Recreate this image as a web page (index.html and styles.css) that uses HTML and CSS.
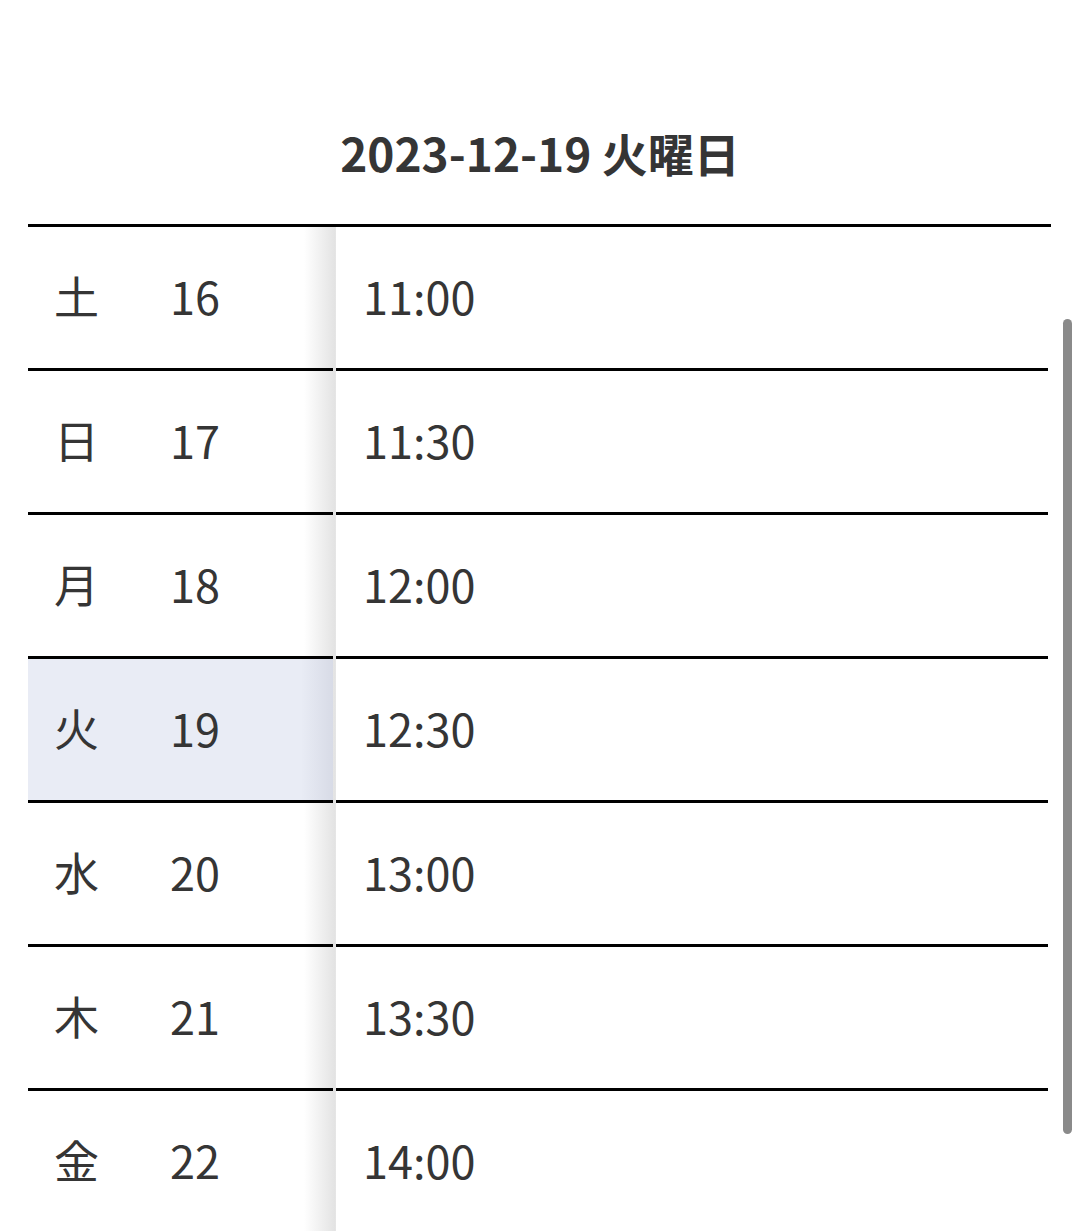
FILE: index.html
```html
<!DOCTYPE html>
<html lang="ja">
<head>
<meta charset="utf-8">
<title>日付と時間</title>
<link rel="stylesheet" href="styles.css">
</head>
<body>
<header class="header">
  <h1 class="title">2023-12-19 火曜日</h1>
</header>
<section class="picker">
  <div class="col col-days">
    <div class="cell"><span class="wd">土</span><span class="dn">16</span></div>
    <div class="cell"><span class="wd">日</span><span class="dn">17</span></div>
    <div class="cell"><span class="wd">月</span><span class="dn">18</span></div>
    <div class="cell is-selected"><span class="wd">火</span><span class="dn">19</span></div>
    <div class="cell"><span class="wd">水</span><span class="dn">20</span></div>
    <div class="cell"><span class="wd">木</span><span class="dn">21</span></div>
    <div class="cell"><span class="wd">金</span><span class="dn">22</span></div>
  </div>
  <div class="col col-times">
    <div class="cell">11:00</div>
    <div class="cell">11:30</div>
    <div class="cell">12:00</div>
    <div class="cell">12:30</div>
    <div class="cell">13:00</div>
    <div class="cell">13:30</div>
    <div class="cell">14:00</div>
  </div>
  <div class="scrollbar"></div>
</section>
</body>
</html>
```
FILE: styles.css
```css
html, body {
  margin: 0;
  padding: 0;
  overflow: hidden;
  background: #fff;
}
body {
  font-family: "Noto Sans CJK JP", "Noto Sans", sans-serif;
  color: #353535;
}
.header {
  height: 224px;
  box-sizing: border-box;
  padding-top: 120px;
}
.title {
  margin: 0;
  font-size: 46px;
  line-height: 64px;
  font-weight: 700;
  text-align: center;
  color: #353535;
}
.picker {
  position: relative;
  margin: 0 29px 0 28px;
  border-top: 3px solid #000;
  display: flex;
  gap: 3px;
  background: linear-gradient(to right, #fff 0, #fff 276px, #e3e3e3 307px, #e8e8e8 308px, #fff 308px);
}
.col-days {
  width: 305px;
  flex: none;
}
.col-times {
  width: 712px;
  flex: none;
}
.cell {
  height: 136px;
  padding-bottom: 5px;
  border-bottom: 3px solid #000;
  display: flex;
  align-items: center;
  font-size: 45px;
  line-height: 1;
}
.col-days .cell {
  padding-left: 26px;
}
.col-times .cell {
  padding-left: 27px;
}
.cell.is-selected {
  background: linear-gradient(to right, rgba(0, 0, 0, 0) 0, rgba(0, 0, 0, 0) calc(100% - 32px), rgba(40, 45, 80, 0.09) 100%), #e9ecf5;
}
.wd {
  width: 116px;
  flex: none;
}
.scrollbar {
  position: absolute;
  left: 1035px;
  top: 92px;
  width: 9px;
  height: 815px;
  border-radius: 5px;
  background: #8a8a8a;
}
```
